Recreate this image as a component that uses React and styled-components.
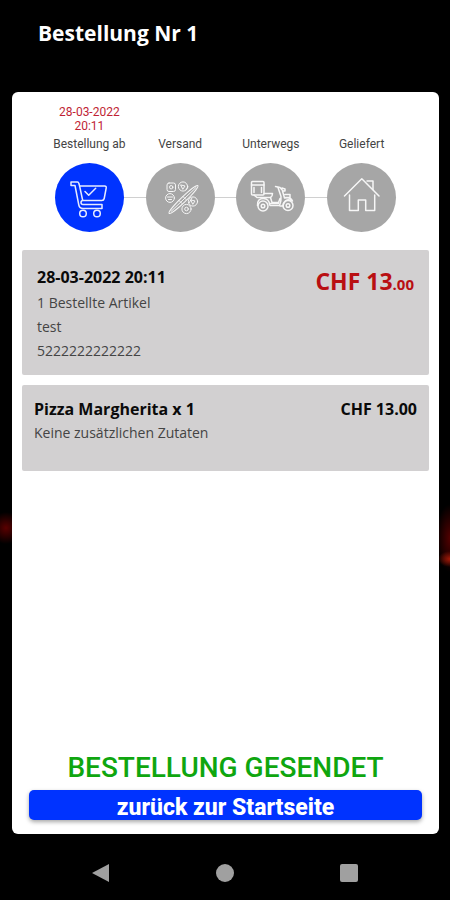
import styled, { createGlobalStyle } from "styled-components";

const steps = [
  { label: "Bestellung ab", date: "28-03-2022", time: "20:11", icon: CartIcon, active: true },
  { label: "Versand", icon: PizzaIcon },
  { label: "Unterwegs", icon: ScooterIcon },
  { label: "Geliefert", icon: HouseIcon },
];

export default function App() {
  return (
    <>
      <GlobalStyle />
      <Screen>
        <Header>
          <Title>Bestellung Nr 1</Title>
        </Header>
        <Card>
          <Steps>
            {steps.map(({ label, date, time, icon: Icon, active }) => (
              <Step key={label}>
                <StepDate>
                  <span>{date}</span>
                  <span>{time}</span>
                </StepDate>
                <StepLabel>{label}</StepLabel>
                <StepRow>
                  <Circle $active={active}>
                    <Icon />
                  </Circle>
                </StepRow>
              </Step>
            ))}
          </Steps>
          <Panels>
            <Panel $tall>
              <div>
                <PanelTitle $spaced>28-03-2022 20:11</PanelTitle>
                <Info>1 Bestellte Artikel</Info>
                <Info>test</Info>
                <Info>5222222222222</Info>
              </div>
              <Total>
                CHF 13<Cents>.00</Cents>
              </Total>
            </Panel>
            <Panel>
              <div>
                <PanelTitle>Pizza Margherita x 1</PanelTitle>
                <Info>Keine zusätzlichen Zutaten</Info>
              </div>
              <Price>CHF 13.00</Price>
            </Panel>
          </Panels>
          <Status>BESTELLUNG GESENDET</Status>
          <HomeButton type="button">zurück zur Startseite</HomeButton>
        </Card>
        <NavBar>
          <NavButton type="button" aria-label="Zurück">
            <svg width="20" height="20" viewBox="0 0 20 20">
              <path d="M18 1v18L1 10z" />
            </svg>
          </NavButton>
          <NavButton type="button" aria-label="Home">
            <svg width="20" height="20" viewBox="0 0 20 20">
              <circle cx="10" cy="10" r="9" />
            </svg>
          </NavButton>
          <NavButton type="button" aria-label="Übersicht">
            <svg width="20" height="20" viewBox="0 0 20 20">
              <rect x="1" y="1" width="18" height="18" rx="2" />
            </svg>
          </NavButton>
        </NavBar>
      </Screen>
    </>
  );
}

function CartIcon() {
  return (
    <StepIcon viewBox="0 0 69 69">
      <path d="M16 22.500v-3.500h6.500q1 0 1.300 1.300l.8 2.700h25q2 0 1.600 2l-2 10.500q-.4 2-2.400 2H28q-2 0-2 2t2 2h19v4H28q-3.500 0-4.200-3.500L20 22.500z" />
      <path d="M24.600 23l3 14M30 28.500l3.700 3.800 7-7" />
      <circle cx="28" cy="50.500" r="3.300" />
      <circle cx="42" cy="50.500" r="3.300" />
    </StepIcon>
  );
}

function PizzaIcon() {
  return (
    <StepIcon viewBox="0 0 69 69" $thin>
      <ellipse cx="37.500" cy="36.500" rx="20" ry="2.600" transform="rotate(-44 37.500 36.500)" />
      <path d="M25 48.500l25-24M33 37.500l3 3M37 33.500l3 3" />
      <rect x="21" y="20" width="8.500" height="8.500" rx="2" />
      <circle cx="25.200" cy="24.200" r="1.700" />
      <circle cx="37" cy="23.500" r="4.600" />
      <path d="M35 22l4 1-2 3zM40 27l2-3" />
      <circle cx="24" cy="35" r="4.400" />
      <path d="M21.500 34h5M22.500 36.500h3" />
      <circle cx="47" cy="38.500" r="4.600" />
      <path d="M45 37l4 1-2 3zM43 40l3-5" />
      <circle cx="40.500" cy="46" r="4.600" />
      <circle cx="40.500" cy="46" r="1.800" />
    </StepIcon>
  );
}

function ScooterIcon() {
  return (
    <StepIcon viewBox="0 0 69 69">
      <rect x="15.500" y="18.500" width="12.500" height="13.500" rx="1" />
      <path d="M15.500 22h12.500M18 24.500v5M25.500 24.500v5M18 32l3 2.500h13.500q2-1 2-4H28" />
      <path d="M21.500 42.500q-.5-7 6-7 5.500 0 6.500 7h9.500q2-5 1.500-9l-3-9M34.500 34.500l1.500 5h6.500l1.500-4" />
      <path d="M33.500 40.500h9M39.500 23.500l4.500 1 3 3.500h2v-2l-3-1M46.500 28l2 7q6-1.500 8 3l-3-1q-5-1-6.500 6h-3M49 31.500h5v3h-4.500" />
      <circle cx="27" cy="43" r="5" />
      <circle cx="27" cy="43" r="1.800" />
      <circle cx="52" cy="42.500" r="5" />
      <circle cx="52" cy="42.500" r="1.800" />
    </StepIcon>
  );
}

function HouseIcon() {
  return (
    <StepIcon viewBox="0 0 69 69">
      <path d="M17.500 33L34.800 15.700 52 33" />
      <path d="M40 18h6v8.500" />
      <path d="M22.500 32v15.500h8.800V37h7.400v10.500h9V32" />
    </StepIcon>
  );
}

const GlobalStyle = createGlobalStyle`
  * {
    box-sizing: border-box;
  }
  body {
    margin: 0;
    background: #000;
    font-family: "Open Sans", sans-serif;
  }
  h1, h2, p {
    margin: 0;
  }
`;

const Screen = styled.div`
  display: flex;
  flex-direction: column;
  min-height: 100vh;
  background:
    radial-gradient(ellipse 16px 16px at 6px 528px, #5a0000, transparent),
    radial-gradient(ellipse 12px 8px at 100% 559px, #a51a08, transparent),
    radial-gradient(ellipse 14px 34px at 100% 538px, #520000, transparent),
    #000;
`;

const Header = styled.header`
  height: 92px;
  padding: 18px 38px 0;
`;

const Title = styled.h1`
  color: #fff;
  font-size: 21px;
  line-height: 30px;
  font-weight: 700;
`;

const Card = styled.main`
  flex: 1;
  display: flex;
  flex-direction: column;
  margin: 0 11px 0 12px;
  padding: 13px 10px 14px;
  background: #fff;
  border-radius: 6px;
`;

const Steps = styled.div`
  display: flex;
  padding: 0 22px;
`;

const Step = styled.div`
  flex: 1;
  font-family: Roboto, sans-serif;
  text-align: center;

  &:not(:first-child) > :last-child::before,
  &:not(:last-child) > :last-child::after {
    background: #d0d0d0;
  }
`;

const StepDate = styled.div`
  display: flex;
  flex-direction: column;
  height: 30px;
  color: #c01f35;
  font-size: 12px;
  line-height: 14px;
`;

const StepLabel = styled.div`
  color: #444;
  font-size: 12px;
  line-height: 18px;
`;

const StepRow = styled.div`
  display: flex;
  align-items: center;
  margin-top: 10px;

  &::before,
  &::after {
    content: "";
    flex: 1;
    height: 1px;
  }
`;

const Circle = styled.div`
  width: 69px;
  height: 69px;
  border-radius: 50%;
  background: ${({ $active }) => ($active ? "#0033ff" : "#a6a6a6")};
`;

const StepIcon = styled.svg`
  display: block;
  width: 100%;
  height: 100%;
  fill: none;
  stroke: #fff;
  stroke-width: ${({ $thin }) => ($thin ? "1px" : "1.5px")};
  stroke-linecap: round;
  stroke-linejoin: round;
  opacity: 0.9;
`;

const Panels = styled.div`
  display: flex;
  flex-direction: column;
  gap: 10px;
  margin: 18px 0 auto;
`;

const Panel = styled.section`
  display: flex;
  justify-content: space-between;
  min-height: ${({ $tall }) => ($tall ? "125px" : "86px")};
  padding: ${({ $tall }) => ($tall ? "15px 15px 10px" : "12px")};
  background: #d2d0d1;
  border-radius: 2px;
`;

const PanelTitle = styled.h2`
  margin-bottom: ${({ $spaced }) => ($spaced ? "2px" : "0")};
  color: #0a0a0a;
  font-size: 16px;
  line-height: 24px;
  font-weight: 700;
`;

const Info = styled.p`
  color: #444;
  font-size: 14px;
  line-height: 24px;
`;

const Total = styled.p`
  color: #b90f12;
  font-size: 23px;
  line-height: 32px;
  font-weight: 700;
`;

const Cents = styled.span`
  font-size: 15px;
`;

const Price = styled.p`
  color: #0a0a0a;
  font-size: 16px;
  line-height: 24px;
  font-weight: 700;
`;

const Status = styled.p`
  color: #0fa60f;
  font-family: Roboto, sans-serif;
  font-size: 28px;
  line-height: 34px;
  font-weight: 500;
  text-align: center;
`;

const HomeButton = styled.button`
  height: 30px;
  margin: 5px 7px 0;
  padding: 6px 0 0;
  border: 0;
  border-radius: 5px;
  background: #0033ff;
  box-shadow: 0 2px 4px rgba(0, 0, 0, 0.35);
  color: #fff;
  font-family: Roboto, sans-serif;
  font-size: 23px;
  line-height: 24px;
  font-weight: 800;
  cursor: pointer;
`;

const NavBar = styled.nav`
  display: flex;
  justify-content: center;
  gap: 84px;
  height: 66px;
  padding-top: 19px;
`;

const NavButton = styled.button`
  display: grid;
  place-items: center;
  width: 40px;
  height: 40px;
  padding: 0;
  border: 0;
  background: none;
  fill: #a0a0a0;
  cursor: pointer;
`;
